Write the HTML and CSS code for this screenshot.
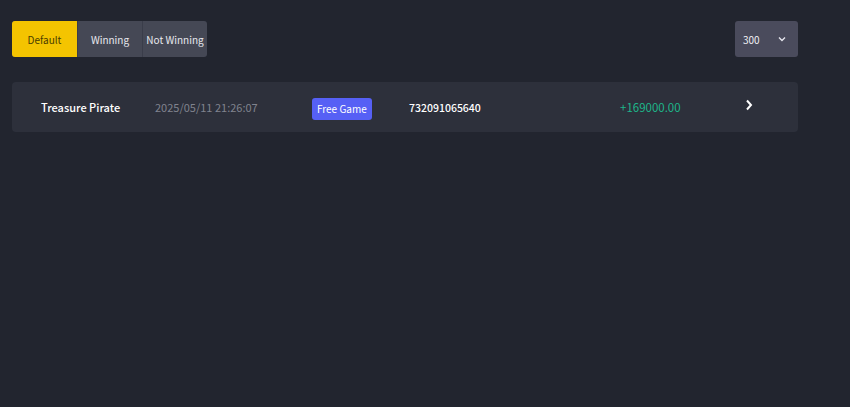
FILE: index.html
```html
<!DOCTYPE html>
<html lang="en">
<head>
  <meta charset="UTF-8">
  <title>Game History</title>
  <link rel="stylesheet" href="styles.css">
</head>
<body>
  <div class="page">
    <div class="toolbar">
      <div class="filters">
        <div class="filter active">Default</div>
        <div class="filter">Winning</div>
        <div class="filter">Not Winning</div>
      </div>
      <div class="select">
        <span>300</span>
        <svg width="8" height="6" viewBox="0 0 8 6"><path d="M1 1.5 L4 4.5 L7 1.5" fill="none" stroke="#e6e6ee" stroke-width="1.4"/></svg>
      </div>
    </div>

    <div class="record">
      <div class="game-name">Treasure Pirate</div>
      <div class="game-time">2025/05/11 21:26:07</div>
      <div class="game-type"><span class="badge">Free Game</span></div>
      <div class="game-id">732091065640</div>
      <div class="game-win">+169000.00</div>
      <div class="game-more">
        <svg width="8" height="12" viewBox="0 0 8 12"><path d="M2 1.5 L6 6 L2 10.5" fill="none" stroke="#ffffff" stroke-width="2"/></svg>
      </div>
    </div>
  </div>
</body>
</html>
```

FILE: styles.css
```css
* {
  margin: 0;
  padding: 0;
  box-sizing: border-box;
}

body {
  font-family: 'Noto Sans CJK SC', 'Noto Sans', sans-serif;
  background-color: #22252f;
  color: #fff;
  height: 407px;
  overflow: hidden;
}

.page {
  width: 786px;
  margin: 21px 0 0 12px;
}

.toolbar {
  display: flex;
  justify-content: space-between;
  align-items: center;
}

.filters {
  display: flex;
  background-color: #454855;
  border-radius: 3px;
  overflow: hidden;
}

.filter {
  height: 36px;
  width: 65px;
  display: flex;
  align-items: center;
  justify-content: center;
  font-size: 10px;
  color: #e8e8ee;
  white-space: nowrap;
  border-left: 1px solid #3a3d4a;
}

.filter:first-child {
  border-left: none;
}

.filter.active {
  background-color: #f4c400;
  color: #4a3c00;
}

.select {
  width: 63px;
  height: 36px;
  background-color: #4a4b5c;
  border-radius: 3px;
  display: flex;
  align-items: center;
  justify-content: space-between;
  padding: 0 12px 0 8px;
  font-size: 10px;
  color: #f0f0f4;
}

.record {
  margin-top: 25px;
  height: 50px;
  background-color: #2d303b;
  border-radius: 4px;
  display: flex;
  align-items: center;
  padding-left: 29px;
  white-space: nowrap;
}

.game-name {
  width: 114px;
  font-size: 11px;
  font-weight: 500;
}

.game-time {
  width: 157px;
  font-size: 11px;
  color: #80838e;
}

.game-type {
  width: 97px;
}

.badge {
  display: inline-block;
  background-color: #5660f5;
  border-radius: 3px;
  font-size: 10px;
  padding: 3px 5px 4px;
  color: #fff;
}

.game-id {
  width: 211px;
  font-size: 10.5px;
  font-weight: 500;
}

.game-win {
  width: 125px;
  font-size: 11.5px;
  color: #1db68a;
}

.game-more {
  display: flex;
  margin-top: -4px;
}
```
